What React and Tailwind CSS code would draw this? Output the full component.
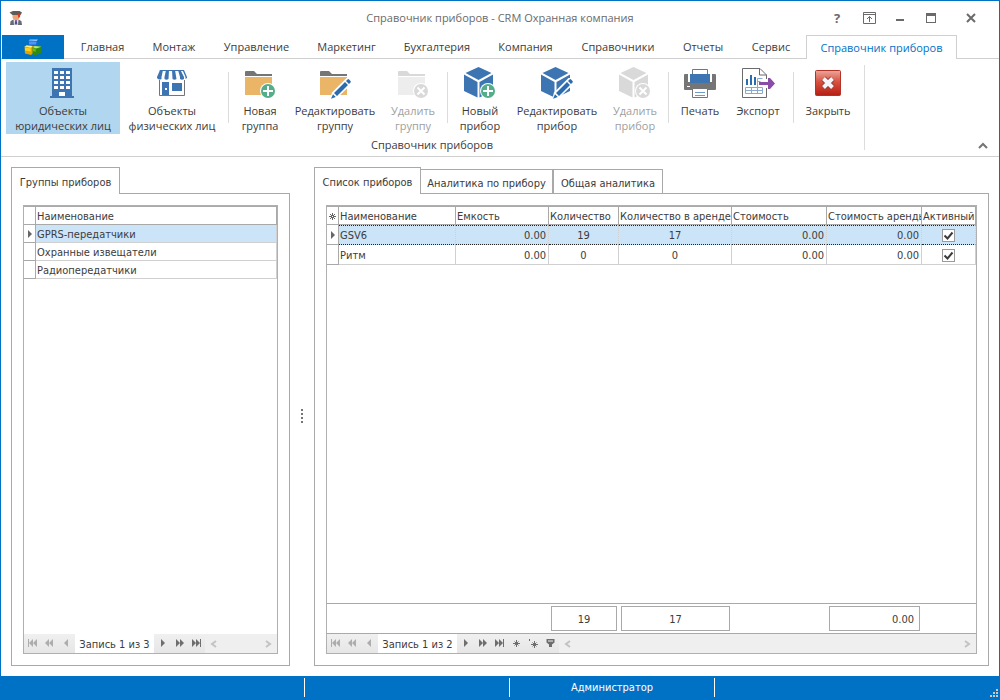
import React from 'react';

const tabs = [
  { label: 'Главная', width: 'w-[71px]' },
  { label: 'Монтаж', width: 'w-[72px]' },
  { label: 'Управление', width: 'w-[93px]' },
  { label: 'Маркетинг', width: 'w-[87px]' },
  { label: 'Бухгалтерия', width: 'w-[94px]' },
  { label: 'Компания', width: 'w-[83px]' },
  { label: 'Справочники', width: 'w-[102px]' },
  { label: 'Отчеты', width: 'w-[68px]' },
  { label: 'Сервис', width: 'w-[68px]' },
];

const groups = ['GPRS-передатчики', 'Охранные извещатели', 'Радиопередатчики'];

const devices = [
  { name: 'GSV6', capacity: '0.00', count: 19, rented: 17, cost: '0.00', rentCost: '0.00', active: true },
  { name: 'Ритм', capacity: '0.00', count: 0, rented: 0, cost: '0.00', rentCost: '0.00', active: true },
];

const GuardIcon = () => (
  <svg width="14" height="16" viewBox="0 0 14 16">
    <path d="M1 15l.5-3.500Q2.500 10 5 9.500h4q2.500.5 3.500 2L13 15z" fill="#6b6b73" />
    <path d="M4.500 9.500h5L9 15H5z" fill="#dfe4f2" />
    <path d="M6.300 10h1.400l.6 4.500H5.700z" fill="#5a4a98" />
    <path d="M3.500 4.500h7v2q0 3.500-3.500 3.500T3.500 6.500z" fill="#f0a575" />
    <path d="M.5 2.500 4 1h6.500L13 2.500 11.500 5h-8z" fill="#5d5d5d" />
    <path d="M7.500 4.500 11.500 3.500 11 7l-1.500 1L9 5.500z" fill="#e0341c" />
  </svg>
);

const CubesIcon = () => (
  <svg width="18" height="17" viewBox="0 0 18 17">
    <path d="M4.500 1.500 6 .5h8l-.5 7-1.500 1H5.500z" fill="#1667d9" />
    <path d="M4.500 1.500 6 .5h8l-1.500 1.500z" fill="#9cc8fb" />
    <path d="M5 2.500h7.500l-.5 3H5.200z" fill="#4b97f3" />
    <path d="M.5 7.500 2.500 6.500l6 .5 1 1v6L7 16l-6-1.500z" fill="#e3a400" />
    <path d="M.5 7.500 2.500 6.500l6 .5-1.500 1.800z" fill="#fff08a" />
    <path d="M1 8.500l5.800 1v3L1 11.500z" fill="#fdd21f" />
    <path d="m8.500 8 2-1 6.500.5.8 1-.8 5.500-6 2.500L8.500 15z" fill="#2f8a10" />
    <path d="m8.500 8 2-1 7 .8-5.500 1.700z" fill="#b4ec78" />
    <path d="m9 9 2.800 1-.3 3L9 12z" fill="#5dbd2c" />
  </svg>
);

const BuildingIcon = () => (
  <svg width="32" height="32" viewBox="1 0 32 32">
    <path d="M6 1h20v28h2v2H4v-2h2z" fill="#3d75b3" />
    <path d="M8 4h4v3H8zm6 0h4v3h-4zm6 0h4v3h-4zM8 9h4v3H8zm6 0h4v3h-4zm6 0h4v3h-4zM8 14h4v3H8zm6 0h4v3h-4zm6 0h4v3h-4zM8 19h4v3H8zm6 0h4v3h-4zm6 0h4v3h-4zM13 25h6v4h-6z" fill="#fff" />
  </svg>
);

const ShopIcon = () => (
  <svg width="32" height="32" viewBox="0 0 32 32">
    <path d="M3.500 11v17.500h25V11" fill="#fff" stroke="#757575" />
    <path d="M6 15h7v13H6z" fill="#3d75b3" />
    <path d="M9 21h2v2H9z" fill="#fff" />
    <path d="M16 16h10v8H16z" fill="#3d75b3" />
    <path d="M4 3h24l3 7v1q0 2-2.500 2T24 12q-1 1-2.500 1T19 12q-1 1-3 1t-3-1q-1 1-2.500 1T8 12q-1 1-4 1-3 0-3-2v-1z" fill="#fff" />
    <path d="M4 3h3L5.500 10v2Q3 13.500 1 11v-1zM10 3h3l-.5 9q-2 1.500-4 0v-2zM16 3h3l1.500 9q-2 1.500-4 0zM22 3h2.500L28 10v2q-2 1.500-4 0v-2zM26.500 3H28l3 7v1l-1.500 1V10z" fill="#3d75b3" />
    <path d="M4 3h24v1H3.600z" fill="#3d75b3" />
  </svg>
);

const Badge = ({ kind }) => (
  <g>
    <circle cx="24" cy="24" r="8" fill="#fff" />
    <circle cx="24" cy="24" r="7" fill={kind === 'add' ? '#54ae8a' : '#d9d9d9'} />
    {kind === 'add' ? (
      <path d="M24 19v10M19 24h10" stroke="#fff" strokeWidth="2" />
    ) : (
      <path d="m20.500 20.500 7 7m0-7-7 7" stroke="#fff" strokeWidth="2" />
    )}
  </g>
);

const Pencil = () => (
  <g>
    <path d="M11 32.500 13 25.500 27.500 11h3L33 13.500v3L18 31z" fill="#fff" />
    <path d="M15 26 26 15l3 3-11 11zM27 14l1.500-1.500q.8-.8 1.600 0l1.400 1.400q.8.8 0 1.600L30 17zM14 27.200l2.800 2.800L12 31.800z" fill="#2b6cb0" />
  </g>
);

const FolderIcon = ({ kind }) => {
  const off = kind === 'delete';
  return (
    <svg width="34" height="32" viewBox="-1 0 34 32">
      <path d="M1 5q0-1 1-1h8l3 3h15v2H1z" fill={off ? '#d9d9d9' : '#757575'} />
      <path d="M1 10h27v18H1z" fill={off ? '#ededed' : '#eab566'} />
      {kind === 'edit' ? <Pencil /> : <Badge kind={kind} />}
    </svg>
  );
};

const CubeIcon = ({ kind }) => {
  const fill = kind === 'delete' ? '#d9d9d9' : '#3d75b3';
  return (
    <svg width="34" height="32" viewBox="-1 0 34 32">
      <path d="M14.500 0 27.500 6 14.500 13 1.500 6z" fill={fill} />
      <path d="M0 7.500 13.500 15v15.500L0 24z" fill={fill} />
      <path d="M29 7.500 15.500 15v15.500L29 24z" fill={fill} />
      {kind === 'edit' ? <Pencil /> : <Badge kind={kind} />}
    </svg>
  );
};

const PrinterIcon = () => (
  <svg width="32" height="32" viewBox="0 0 32 32">
    <path d="M0 8q0-1 1-1h3v8h24V7h3q1 0 1 1v14q0 1-1 1H1q-1 0-1-1z" fill="#757575" />
    <path d="M8.500 7V2.500h15V7" fill="#fff" stroke="#757575" />
    <path d="M6 7h20v8q0 1-1 1H7q-1 0-1-1z" fill="#3d75b3" />
    <path d="M8.500 21.500h15v9h-15z" fill="#fff" stroke="#757575" />
    <path d="M11 25.500h10M11 28.500h10" stroke="#6d9bd0" />
    <path d="M3 19h3v1H3z" fill="#fff" />
  </svg>
);

const ExportIcon = () => (
  <svg width="34" height="32" viewBox="0 0 34 32">
    <path d="M25.500 12V8l-6.500-6.500H1.500v29h24V21" fill="#fff" stroke="#6b6b6b" />
    <path d="M18.500 1.500V8h7" fill="none" stroke="#6b6b6b" />
    <path d="M5 12h2v6H5zm4-4h2v10H9zm4 2h2v8h-2z" fill="#2b6cb0" />
    <path d="M4.500 20.500h17v6h-17zM4.500 23.500h17M10.500 20.500v6M16.500 26.500v-15h5M16.500 14.500h3" fill="none" stroke="#8aa9d0" />
    <path d="M18 15h9v-4h2l5 5.500-5 5.500h-2v-4h-9z" fill="#8b4ba8" />
  </svg>
);

const CloseIcon = () => (
  <svg width="32" height="32" viewBox="0 0 32 32">
    <defs>
      <linearGradient id="closeFill" x1="0" y1="0" x2="0" y2="1">
        <stop offset="0" stopColor="#eba79c" />
        <stop offset="0.45" stopColor="#d9513f" />
        <stop offset="1" stopColor="#b51f14" />
      </linearGradient>
    </defs>
    <rect x="3.500" y="3.500" width="25" height="25" rx="1" fill="url(#closeFill)" stroke="#b23428" />
    <path d="m11.500 11.500 9 9m0-9-9 9" stroke="#8d3b38" strokeWidth="6" />
    <path d="m11.500 11.500 9 9m0-9-9 9" stroke="#f4f4fa" strokeWidth="4" />
  </svg>
);

const RibbonButton = ({ icon, lines, width, active, disabled }) => (
  <button
    type="button"
    disabled={disabled}
    className={`${width} flex shrink-0 flex-col items-center pt-[5px] whitespace-nowrap ${active ? 'bg-[#b1d6f0]' : ''} ${disabled ? 'text-[#a0a0a0]' : 'text-[#3c3c3c]'}`}
  >
    {icon}
    <span className="mt-1 leading-[15px]">
      {lines.map((line) => (
        <span key={line} className="block">{line}</span>
      ))}
    </span>
  </button>
);

const Separator = () => <div className="mx-1 mt-[10px] h-[51px] w-px shrink-0 bg-[#dcdcdc]" />;

const arrow = 'M0 0 4 4 0 8z';

const NavIcon = ({ name }) => (
  <svg width="13" height="9" viewBox="0 0 13 9" fill="currentColor" stroke="none">
    {name === 'first' && <path d="M2 0h1v8H2zM7 0v8L3 4zM11 0v8L7 4z" />}
    {name === 'prevPage' && <path d="M6 0v8L2 4zM10 0v8L6 4z" />}
    {name === 'prev' && <path d="M8 0v8L4 4z" />}
    {name === 'next' && <path d={arrow} transform="translate(5 0)" />}
    {name === 'nextPage' && <path d="m3 0 4 4-4 4zM7 0l4 4-4 4z" />}
    {name === 'last' && <path d="m2 0 4 4-4 4zM6 0l4 4-4 4zM10 0h1v8h-1z" />}
    {name === 'add' && <path d="M6.500 1v7M3 4.500h7M4.500 2.500l4 4M8.500 2.500l-4 4" stroke="currentColor" />}
    {name === 'edit' && <path d="M7.500 2v7M4 5.500h7M5.500 3.500l4 4M9.500 3.500l-4 4M2.500 0v2" stroke="currentColor" />}
    {name === 'filter' && <path d="M2.500 0h8v3.500L8 5.500V8H5V5.500L2.500 3.500zm1.500 1.500v1h5v-1z" fillRule="evenodd" />}
  </svg>
);

const NavButton = ({ name, label, disabled }) => (
  <button
    type="button"
    aria-label={label}
    disabled={disabled}
    className={`flex w-[17px] items-center justify-center bg-linear-to-b from-[#f0f0f0] to-[#e6e6e6] ${disabled ? 'text-[#adadad]' : 'text-[#6e6e6e]'}`}
  >
    <NavIcon name={name} />
  </button>
);

const Navigator = ({ text, editable }) => (
  <div className="flex h-[19px] bg-[#efefef]">
    <NavButton name="first" label="Первая запись" disabled />
    <NavButton name="prevPage" label="Предыдущая страница" disabled />
    <NavButton name="prev" label="Предыдущая запись" disabled />
    <div className="w-[79px] bg-white pt-0.5 text-center leading-[17px] whitespace-nowrap">{text}</div>
    <NavButton name="next" label="Следующая запись" />
    <NavButton name="nextPage" label="Следующая страница" />
    <NavButton name="last" label="Последняя запись" />
    {editable && (
      <>
        <NavButton name="add" label="Добавить" />
        <NavButton name="edit" label="Изменить" />
        <NavButton name="filter" label="Фильтр" />
      </>
    )}
    <div className="flex flex-1 items-center justify-between px-[5px] text-[#c3c3c3]">
      <svg width="7" height="8" viewBox="0 0 7 8" fill="none" stroke="currentColor" strokeWidth="2">
        <path d="M6 1 2 4l4 3" />
      </svg>
      <svg width="7" height="8" viewBox="0 0 7 8" fill="none" stroke="currentColor" strokeWidth="2">
        <path d="m1 1 4 3-4 3" />
      </svg>
    </div>
  </div>
);

const RowMarker = () => (
  <svg className="mx-auto" width="4" height="8" viewBox="0 0 4 8">
    <path d={arrow} fill="#666" />
  </svg>
);

const DeviceColumns = () => (
  <colgroup>
    <col className="w-[12px]" />
    <col className="w-[117px]" />
    <col className="w-[93px]" />
    <col className="w-[70px]" />
    <col className="w-[113px]" />
    <col className="w-[95px]" />
    <col className="w-[95px]" />
    <col className="w-[54px]" />
  </colgroup>
);

const headCell = 'overflow-hidden border border-l-0 border-[#a9a9a9] pt-0.5 pl-px pr-0 pb-0 text-left font-normal whitespace-nowrap';
const markCell = 'border-r border-b border-[#a9a9a9] bg-white p-0';
const bodyCell = 'border-r border-b border-[#d0d0d0] pt-0.5 pb-0';
const focusCell = 'border-r border-r-[#d0d0d0] border-y border-y-[#222] border-dotted pt-px pb-0';

const GroupPanel = () => (
  <section className="flex w-[279px] shrink-0 flex-col">
    <div className="flex">
      <button type="button" className="z-10 -mb-px h-[27px] w-[109px] border border-b-0 border-[#a9a9a9] bg-white pt-1 whitespace-nowrap">
        Группы приборов
      </button>
    </div>
    <div className="flex flex-1 flex-col border border-[#a9a9a9] p-[11px]">
      <div className="flex flex-1 flex-col border border-[#b0b0b0]">
        <div className="flex-1">
          <table className="w-full table-fixed border-separate border-spacing-0">
            <colgroup>
              <col className="w-[12px]" />
              <col />
            </colgroup>
            <thead>
              <tr className="h-[19px]">
                <th className={headCell}></th>
                <th className={headCell}>Наименование</th>
              </tr>
            </thead>
            <tbody>
              {groups.map((name, i) => (
                <tr key={name} className="h-[18px]">
                  <td className={markCell}>{i === 0 && <RowMarker />}</td>
                  <td className={`${bodyCell} pl-px ${i === 0 ? 'bg-[#cce4f7]' : ''}`}>{name}</td>
                </tr>
              ))}
            </tbody>
          </table>
        </div>
        <Navigator text="Запись 1 из 3" />
      </div>
    </div>
  </section>
);

const DevicePanel = () => (
  <section className="flex min-w-0 flex-1 flex-col">
    <div className="flex items-end">
      <button type="button" className="z-10 -mb-px h-[27px] w-[107px] border border-b-0 border-[#a9a9a9] bg-white pt-1 whitespace-nowrap">
        Список приборов
      </button>
      <button type="button" className="h-6 w-[132px] border-t border-r border-[#a9a9a9] pt-1 whitespace-nowrap">
        Аналитика по прибору
      </button>
      <button type="button" className="h-6 w-[110px] border border-b-0 border-[#a9a9a9] pt-1 whitespace-nowrap">
        Общая аналитика
      </button>
    </div>
    <div className="flex flex-1 flex-col border border-[#a9a9a9] p-[11px]">
      <div className="flex flex-1 flex-col border border-[#b0b0b0]">
        <div className="flex-1">
          <table className="w-full table-fixed border-separate border-spacing-0">
            <DeviceColumns />
            <thead>
              <tr className="h-[19px]">
                <th className={headCell}>
                  <svg width="9" height="9" viewBox="0 0 9 9" stroke="#666" fill="none">
                    <path d="M4.500 1v7M1 4.500h7M2 2l5 5M7 2 2 7" />
                    <path d="M4.500 4v1" stroke="#fff" />
                  </svg>
                </th>
                <th className={headCell}>Наименование</th>
                <th className={headCell}>Емкость</th>
                <th className={headCell}>Количество</th>
                <th className={headCell}>Количество в аренде</th>
                <th className={headCell}>Стоимость</th>
                <th className={headCell}>Стоимость аренды</th>
                <th className={headCell}>Активный</th>
              </tr>
            </thead>
            <tbody>
              {devices.map((d, i) => {
                const cell = i === 0 ? focusCell : bodyCell;
                return (
                  <tr key={d.name} className={`h-[20px] ${i === 0 ? 'bg-[#cce4f7]' : ''}`}>
                    <td className={markCell}>{i === 0 && <RowMarker />}</td>
                    <td className={`${cell} pl-px`}>{d.name}</td>
                    <td className={`${cell} pr-0.5 text-right`}>{d.capacity}</td>
                    <td className={`${cell} text-center`}>{d.count}</td>
                    <td className={`${cell} text-center`}>{d.rented}</td>
                    <td className={`${cell} pr-0.5 text-right`}>{d.cost}</td>
                    <td className={`${cell} pr-0.5 text-right`}>{d.rentCost}</td>
                    <td className={cell}>
                      <label className="relative mx-auto block h-[13px] w-[13px]">
                        <input
                          type="checkbox"
                          defaultChecked={d.active}
                          aria-label={`Активный: ${d.name}`}
                          className="peer block h-[13px] w-[13px] appearance-none border border-[#9a9a9a] bg-white"
                        />
                        <svg className="pointer-events-none absolute inset-0 hidden peer-checked:block" width="13" height="13" viewBox="0 0 13 13">
                          <path d="m2.500 6.500 3 3 5-6" fill="none" stroke="#3c3c3c" strokeWidth="2" />
                        </svg>
                      </label>
                    </td>
                  </tr>
                );
              })}
            </tbody>
          </table>
        </div>
        <div className="border-y border-[#a9a9a9] py-0.5">
          <table className="w-full table-fixed border-separate border-spacing-0">
            <DeviceColumns />
            <tbody>
              <tr>
                <td className="p-0" colSpan={3}></td>
                <td className="p-0">
                  <div className="mx-0.5 h-[25px] border border-[#a9a9a9] pt-px text-center leading-6">19</div>
                </td>
                <td className="p-0">
                  <div className="mx-0.5 h-[25px] border border-[#a9a9a9] pt-px text-center leading-6">17</div>
                </td>
                <td className="p-0"></td>
                <td className="p-0">
                  <div className="mx-0.5 h-[25px] border border-[#a9a9a9] pt-px pr-[5px] text-right leading-6">0.00</div>
                </td>
                <td className="p-0"></td>
              </tr>
            </tbody>
          </table>
        </div>
        <Navigator text="Запись 1 из 2" editable />
      </div>
    </div>
  </section>
);

const App = () => {
  return (
    <div className="flex min-h-screen flex-col border border-b-0 border-[#0072c6] bg-white font-['Open_Sans','Noto_Sans',sans-serif] text-[11px] text-[#3c3c3c]">
      <header className="flex h-[34px] items-center">
        <div className="flex w-[180px] pl-2">
          <GuardIcon />
        </div>
        <h1 className="flex-1 text-center whitespace-nowrap text-[#6a6a6a]">
          Справочник приборов - CRM Охранная компания
        </h1>
        <div className="flex w-[180px] justify-end pr-3 text-[#6a6a6a]">
          <button type="button" aria-label="Справка" className="w-8 text-[13px] leading-4 font-bold">?</button>
          <button type="button" aria-label="Свернуть ленту" className="flex w-8 items-center justify-center">
            <svg width="13" height="12" viewBox="0 0 13 12" fill="none" stroke="currentColor">
              <path d="M.5.500h12v11H.500zM.5 2.500h12M6.500 10V4.500M4 7l2.500-2.500L9 7" />
            </svg>
          </button>
          <button type="button" aria-label="Свернуть" className="flex w-[30px] items-center justify-center">
            <svg width="8" height="10" viewBox="0 0 8 10"><path d="M0 6h8v2H0z" fill="currentColor" /></svg>
          </button>
          <button type="button" aria-label="Развернуть" className="flex w-8 items-center justify-center">
            <svg width="10" height="10" viewBox="0 0 10 10"><path d="M0 0h10v10H0zM1 3v6h8V3z" fillRule="evenodd" fill="currentColor" /></svg>
          </button>
          <button type="button" aria-label="Закрыть окно" className="ml-2 flex w-8 items-center justify-center">
            <svg width="10" height="10" viewBox="0 0 10 10"><path d="m1 1 8 8m0-8-8 8" stroke="currentColor" strokeWidth="2" /></svg>
          </button>
        </div>
      </header>

      <nav className="flex h-6 border-b border-[#d0d0d0] pl-px">
        <button type="button" aria-label="Меню приложения" className="mr-[3px] -mb-px flex w-[62px] items-center justify-center bg-[#0072c6]">
          <CubesIcon />
        </button>
        {tabs.map((tab) => (
          <button key={tab.label} type="button" className={`${tab.width} pt-0.5 text-center whitespace-nowrap`}>
            {tab.label}
          </button>
        ))}
        <button type="button" className="-mb-px ml-px w-[151px] border border-b-0 border-[#d0d0d0] bg-white pt-0.5 whitespace-nowrap text-[#0072c6]">
          Справочник приборов
        </button>
      </nav>

      <div className="flex h-[98px] items-end justify-between border-b border-[#d0d0d0] pt-[3px] pl-[5px]">
        <div className="flex h-full">
          <div className="flex flex-col">
            <div className="flex h-[72px]">
              <RibbonButton active width="w-[114px]" icon={<BuildingIcon />} lines={['Объекты', 'юридических лиц']} />
              <RibbonButton width="w-[104px]" icon={<ShopIcon />} lines={['Объекты', 'физических лиц']} />
              <Separator />
              <RibbonButton width="w-[54px]" icon={<FolderIcon kind="add" />} lines={['Новая', 'группа']} />
              <RibbonButton width="w-[96px]" icon={<FolderIcon kind="edit" />} lines={['Редактировать', 'группу']} />
              <RibbonButton disabled width="w-[60px]" icon={<FolderIcon kind="delete" />} lines={['Удалить', 'группу']} />
              <Separator />
              <RibbonButton width="w-[56px]" icon={<CubeIcon kind="add" />} lines={['Новый', 'прибор']} />
              <RibbonButton width="w-[98px]" icon={<CubeIcon kind="edit" />} lines={['Редактировать', 'прибор']} />
              <RibbonButton disabled width="w-[58px]" icon={<CubeIcon kind="delete" />} lines={['Удалить', 'прибор']} />
              <Separator />
              <RibbonButton width="w-[54px]" icon={<PrinterIcon />} lines={['Печать']} />
              <RibbonButton width="w-[62px]" icon={<ExportIcon />} lines={['Экспорт']} />
              <Separator />
              <RibbonButton width="w-[60px]" icon={<CloseIcon />} lines={['Закрыть']} />
            </div>
            <div className="pt-0.5 text-center leading-[18px]">Справочник приборов</div>
          </div>
          <div className="mt-[3px] ml-[6px] h-[85px] w-px bg-[#dcdcdc]" />
        </div>
        <button type="button" aria-label="Свернуть ленту" className="mr-[11px] mb-[7px]">
          <svg width="10" height="7" viewBox="0 0 10 7" fill="none" stroke="#757575" strokeWidth="2">
            <path d="m1 6 4-4 4 4" />
          </svg>
        </button>
      </div>

      <main className="flex flex-1 p-[10px] font-['DejaVu_Sans_Condensed','DejaVu_Sans',sans-serif] leading-[14px]">
        <GroupPanel />
        <div className="flex w-6 shrink-0 flex-col items-center justify-center gap-0.5 pb-0.5">
          {[0, 1, 2, 3].map((n) => (
            <span key={n} className="h-0.5 w-0.5 bg-[#757575]" />
          ))}
        </div>
        <DevicePanel />
      </main>

      <footer className="flex h-6 bg-[#0072c6] pt-0.5 pb-[3px] font-['DejaVu_Sans_Condensed','DejaVu_Sans',sans-serif] leading-5 text-white">
        <div className="w-[304px] border-r border-white"></div>
        <div className="w-[205px] border-r border-white"></div>
        <div className="w-[205px] border-r border-white text-center">Администратор</div>
        <div className="flex flex-1 items-end justify-end pr-px">
          <svg width="8" height="8" viewBox="0 0 8 8" fill="#c8c8c8">
            <path d="M6 0h2v2H6zM3 3h2v2H3zM6 3h2v2H6zM0 6h2v2H0zM3 6h2v2H3zM6 6h2v2H6z" />
          </svg>
        </div>
      </footer>
    </div>
  );
};

export default App;
